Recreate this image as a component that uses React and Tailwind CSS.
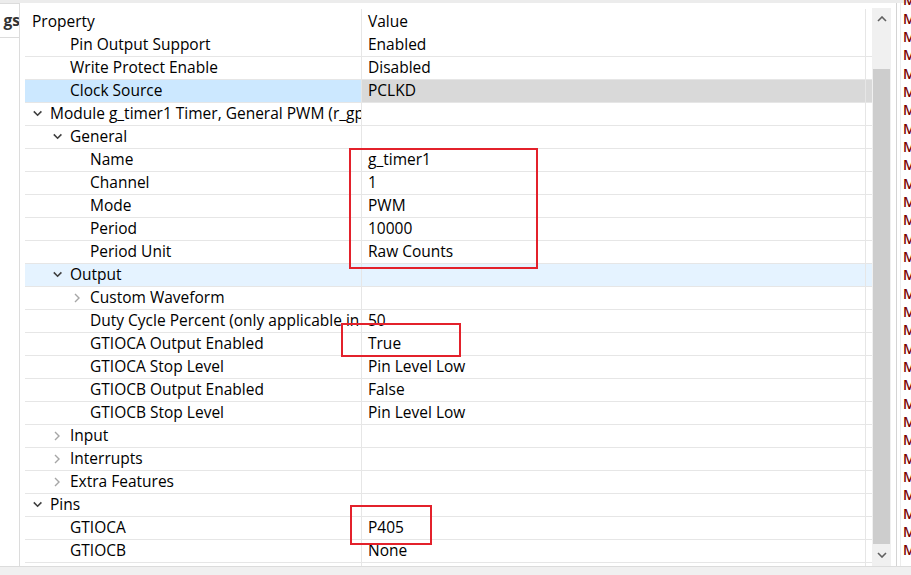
import React from 'react';

const rows = [
  { label: 'Pin Output Support', level: 1, value: 'Enabled' },
  { label: 'Write Protect Enable', level: 1, value: 'Disabled' },
  { label: 'Clock Source', level: 1, value: 'PCLKD', selected: true },
  { label: 'Module g_timer1 Timer, General PWM (r_gpt)', level: 0, toggle: 'open' },
  { label: 'General', level: 1, toggle: 'open' },
  { label: 'Name', level: 2, value: 'g_timer1' },
  { label: 'Channel', level: 2, value: '1' },
  { label: 'Mode', level: 2, value: 'PWM' },
  { label: 'Period', level: 2, value: '10000' },
  { label: 'Period Unit', level: 2, value: 'Raw Counts' },
  { label: 'Output', level: 1, toggle: 'open', hover: true },
  { label: 'Custom Waveform', level: 2, toggle: 'closed' },
  { label: 'Duty Cycle Percent (only applicable in PWM mode)', level: 2, value: '50' },
  { label: 'GTIOCA Output Enabled', level: 2, value: 'True' },
  { label: 'GTIOCA Stop Level', level: 2, value: 'Pin Level Low' },
  { label: 'GTIOCB Output Enabled', level: 2, value: 'False' },
  { label: 'GTIOCB Stop Level', level: 2, value: 'Pin Level Low' },
  { label: 'Input', level: 1, toggle: 'closed' },
  { label: 'Interrupts', level: 1, toggle: 'closed' },
  { label: 'Extra Features', level: 1, toggle: 'closed' },
  { label: 'Pins', level: 0, toggle: 'open' },
  { label: 'GTIOCA', level: 1, value: 'P405' },
  { label: 'GTIOCB', level: 1, value: 'None' },
];

const indent = ['pl-[8px]', 'pl-[28px]', 'pl-[48px]'];

function Toggle({ kind }) {
  if (kind === 'open') {
    return (
      <svg width="17" height="8" viewBox="0 0 17 8" className="shrink-0">
        <path d="M0.8 1.4 L4.6 5.2 L8.4 1.4" fill="none" stroke="#3f3f3f" strokeWidth="1.6" />
      </svg>
    );
  }
  if (kind === 'closed') {
    return (
      <svg width="17" height="10" viewBox="0 0 17 10" className="shrink-0">
        <path d="M2 1 L6 5 L2 9" fill="none" stroke="#a6a6a6" strokeWidth="1.4" />
      </svg>
    );
  }
  return <span className="w-[17px] shrink-0" />;
}

function Row({ row }) {
  const labelBg = row.selected ? 'bg-[#cce8ff]' : row.hover ? 'bg-[#e5f3ff]' : '';
  const valueBg = row.selected ? 'bg-[#d9d9d9]' : row.hover ? 'bg-[#e5f3ff]' : '';
  return (
    <div className="flex h-[23px] shrink-0 border-b border-[#e6e6e6]">
      <div className={`w-[337px] shrink-0 flex items-center overflow-hidden whitespace-nowrap border-r border-[#e6e6e6] ${indent[row.level]} ${labelBg}`}>
        <Toggle kind={row.toggle} />
        <span>{row.label}</span>
      </div>
      <div className={`w-[504px] shrink-0 flex items-center pl-[6px] border-r border-[#e6e6e6] ${valueBg}`}>
        {row.value}
      </div>
      <div className={`flex-1 ${valueBg}`} />
    </div>
  );
}

export default function App() {
  return (
    <div
      className="w-[911px] h-[575px] bg-white flex flex-col overflow-hidden text-[15.5px] text-black leading-none"
      style={{ fontFamily: '"Open Sans", "Noto Sans", sans-serif' }}
    >
      <div className="h-[3px] bg-[#ececec] shrink-0" />
      <div className="flex flex-1 min-h-0">
        {/* left tab strip */}
        <div className="w-[20px] shrink-0 flex flex-col border-r border-[#dcdcdc]">
          <div className="h-[35px] border-b border-t border-[#dcdcdc] flex items-center justify-end overflow-hidden text-[#333] font-bold">
            <span className="-mr-[1px]">gs</span>
          </div>
        </div>

        {/* property table */}
        <div className="w-[852px] shrink-0 pl-[5px] pt-[6px] relative flex flex-col overflow-hidden">
          <div className="flex h-[25px] shrink-0">
            <div className="w-[337px] shrink-0 flex items-center pl-[7px] border-r border-[#e6e6e6]">Property</div>
            <div className="w-[504px] shrink-0 flex items-center pl-[6px] border-r border-[#e6e6e6]">Value</div>
          </div>
          {rows.map((r, i) => (
            <Row key={i} row={r} />
          ))}
          <div className="flex flex-1">
            <div className="w-[337px] shrink-0 border-r border-[#e6e6e6]" />
            <div className="w-[504px] shrink-0 border-r border-[#e6e6e6]" />
          </div>

          {/* annotation boxes */}
          <div className="absolute left-[329px] top-[145px] w-[189px] h-[121px] border-2 border-[#e3212b]" />
          <div className="absolute left-[321px] top-[320px] w-[120px] h-[34px] border-2 border-[#e3212b]" />
          <div className="absolute left-[330px] top-[502px] w-[82px] h-[40px] border-2 border-[#e3212b]" />
        </div>

        {/* vertical scrollbar */}
        <div className="w-[19px] shrink-0 flex flex-col bg-[#f0f0f0] mt-[5px] mb-[0px]">
          <div className="h-[22px] flex items-center justify-center">
            <svg width="10" height="6" viewBox="0 0 10 6">
              <path d="M1 5 L5 1 L9 5" fill="none" stroke="#606060" strokeWidth="1.6" />
            </svg>
          </div>
          <div className="h-[39px]" />
          <div className="flex-1 mx-[1px] bg-[#cdcdcd]" />
          <div className="h-[22px] flex items-center justify-center">
            <svg width="10" height="6" viewBox="0 0 10 6">
              <path d="M1 1 L5 5 L9 1" fill="none" stroke="#606060" strokeWidth="1.6" />
            </svg>
          </div>
        </div>

        <div className="w-[6px] shrink-0 border-r border-[#d4d4d4]" />

        {/* right console strip */}
        <div className="flex-1 border-l border-[#ececec] ml-[3px] overflow-hidden pl-[2px] flex flex-col -mt-[12px] text-[#7a0000] text-[14px] font-semibold">
          {Array.from({ length: 31 }).map((_, i) => (
            <div key={i} className="h-[18.35px] flex items-center shrink-0">M</div>
          ))}
        </div>
      </div>
      <div className="h-[9px] shrink-0 bg-[#f0f0f0] border-t border-[#dcdcdc]" />
    </div>
  );
}
